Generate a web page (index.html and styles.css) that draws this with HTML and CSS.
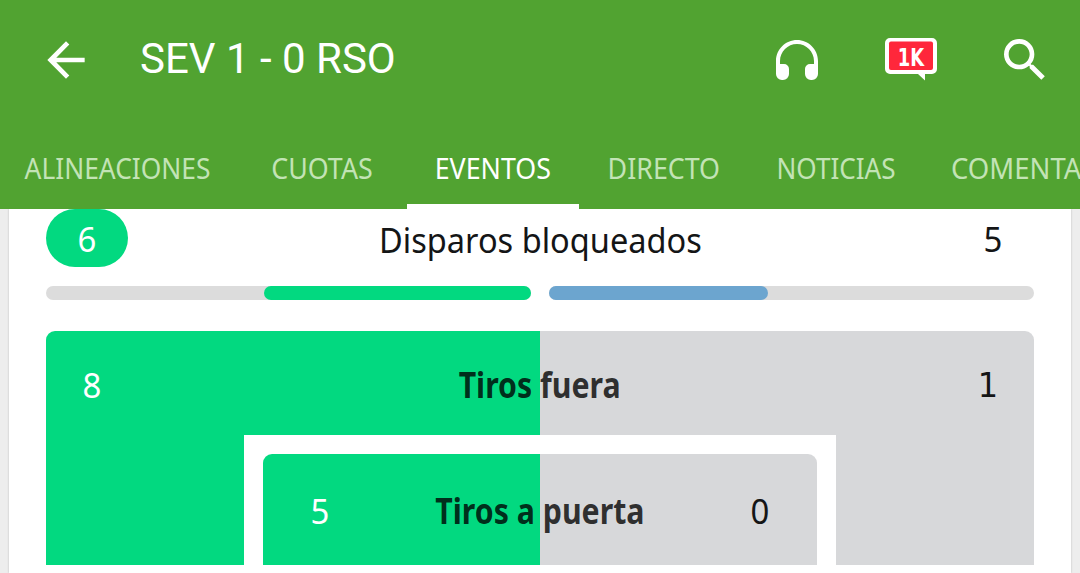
FILE: index.html
```html
<!DOCTYPE html>
<html lang="es">
<head>
<meta charset="utf-8">
<title>SEV 1 - 0 RSO</title>
<link rel="stylesheet" href="styles.css">
</head>
<body>
<header class="header">
  <div class="toolbar">
    <svg class="back" viewBox="0 0 24 24"><path d="M20 11H7.83l5.59-5.59L12 4l-8 8 8 8 1.41-1.41L7.83 13H20v-2z"/></svg>
    <h1 class="title">SEV 1 - 0 RSO</h1>
    <svg class="headphones" viewBox="0 0 42 40"><path d="M21 0C9.400 0 0 9.400 0 21v13a6 6 0 0 0 6 6h1a6 6 0 0 0 6-6v-5a5 5 0 0 0-5-5H4v-3C4 11.600 11.600 4 21 4s17 7.600 17 17v3h-4a5 5 0 0 0-5 5v5a6 6 0 0 0 6 6h1a6 6 0 0 0 6-6V21C42 9.400 32.600 0 21 0z"/></svg>
    <div class="comments">
      <svg class="bubble" viewBox="0 0 52 43"><path d="M5 0h42a5 5 0 0 1 5 5v26a5 5 0 0 1-5 5h-7v6.500L33 36H5a5 5 0 0 1-5-5V5a5 5 0 0 1 5-5z"/><rect class="bubble-fill" x="4" y="3.500" width="44" height="28.500" rx="2"/></svg>
      <span class="count">1K</span>
    </div>
    <svg class="search" viewBox="0 0 24 24"><path d="M15.500 14h-.79l-.28-.27A6.471 6.471 0 0 0 16 9.500 6.500 6.500 0 1 0 9.500 16c1.610 0 3.090-.59 4.230-1.570l.27.280v.79l5 4.990L20.490 19l-4.990-5zm-6 0C7.010 14 5 11.990 5 9.500S7.010 5 9.500 5 14 7.010 14 9.500 11.990 14 9.500 14z"/></svg>
  </div>
  <nav class="tabs">
    <a class="tab t1"><span class="fit">ALINEACIONES</span></a>
    <a class="tab t2"><span class="fit">CUOTAS</span></a>
    <a class="tab t3 active"><span class="fit">EVENTOS</span></a>
    <a class="tab t4"><span class="fit">DIRECTO</span></a>
    <a class="tab t5"><span class="fit">NOTICIAS</span></a>
    <a class="tab t6"><span class="fit">COMENTARIOS</span></a>
  </nav>
</header>
<main class="card">
  <section class="stat">
    <span class="value pill"><span class="num">6</span></span>
    <span class="label fit">Disparos bloqueados</span>
    <span class="value"><span class="num">5</span></span>
  </section>
  <div class="bars">
    <div class="bar home"><div class="fill" style="width:267px"></div></div>
    <div class="bar away"><div class="fill" style="width:219px"></div></div>
  </div>
  <section class="outer split">
    <div class="row outer-row">
      <span class="num light">8</span>
      <span class="name fit n1">Tiros fuera</span>
      <span class="num footed">1</span>
    </div>
    <div class="frame">
      <div class="inner split row">
        <span class="num light">5</span>
        <span class="name fit n2">Tiros a puerta</span>
        <span class="num">0</span>
      </div>
    </div>
  </section>
</main>
</body>
</html>
```
FILE: styles.css
```css
* { box-sizing: border-box; }
body {
  margin: 0;
  width: 1080px;
  height: 573px;
  overflow: hidden;
  background: #ededed;
  font-family: "Noto Sans", sans-serif;
  color: #141516;
}
svg { display: block; fill: #fff; flex: none; }
.header { height: 209px; background: #51a331; overflow: hidden; position: relative; z-index: 1; }
.toolbar { height: 120px; display: flex; align-items: center; padding: 0 27px 0 38px; }
.back { width: 56px; height: 56px; }
.title {
  margin: -3px auto 0 46px;
  font: 400 42px/50px Roboto, sans-serif;
  color: #fff;
  white-space: nowrap;
}
.headphones { width: 42px; height: 40px; margin-right: 67px; }
.comments { display: grid; width: 52px; height: 43px; margin: -2px 60px 0 0; }
.bubble, .count { grid-area: 1 / 1; }
.bubble { width: 52px; height: 43px; }
.bubble-fill { fill: #ff273b; }
.count {
  justify-self: center;
  font: 700 24.500px/39px "DejaVu Sans", sans-serif;
  color: #fff;
  transform: scaleX(.73);
}
.search { width: 56px; height: 56px; }
.tabs { display: flex; height: 89px; margin-left: -3px; width: 1200px; }
.tab {
  flex: none;
  display: flex;
  justify-content: center;
  padding-top: 28px;
  font-size: 28.500px;
  line-height: 40px;
  color: #c3e3b6;
  border-bottom: 5px solid transparent;
}
.t1 { width: 242px; }
.t2 { width: 166px; }
.t3 { width: 172px; margin-left: 2px; }
.t4 { width: 169px; }
.t5 { width: 176px; }
.t6 { width: 250px; justify-content: flex-start; padding-left: 27px; }
.active { color: #fff; border-color: #fff; }
.fit { display: block; white-space: nowrap; transform: scaleX(.94); }
.t1 .fit { transform: scaleX(.925); }
.t5 .fit { transform: scaleX(.915); }
.t6 .fit { transform: scaleX(.965); transform-origin: left; }
.card {
  width: 1062px;
  height: 364px;
  margin-left: 9px;
  padding: 0 37px;
  background: #fff;
  box-shadow: 0 0 2px #bbb;
}
.stat { height: 58px; display: flex; justify-content: space-between; align-items: center; font-size: 35px; line-height: 48px; }
.stat .label { padding: 3px 0 0 2px; transform: scaleX(.93); }
.value { width: 82px; display: flex; justify-content: center; align-items: center; height: 58px; padding-top: 2px; }
.pill { background: #02d980; color: #fff; border-radius: 29px; }
.bars { margin-top: 19px; display: flex; justify-content: space-between; }
.bar { width: 485px; height: 14px; border-radius: 7px; background: #dcdcdc; display: flex; }
.home { justify-content: flex-end; }
.fill { border-radius: 7px; background: #02d980; }
.away .fill { background: #6ca5cf; }
.split { background: linear-gradient(90deg, #02d980 50%, #d7d8da 50%); border-radius: 9px 9px 0 0; }
.outer { height: 234px; margin-top: 31px; }
.row { display: flex; justify-content: space-between; align-items: center; }
.outer-row { height: 104px; padding: 3px 35px 0 36px; }
.num { font-size: 35px; line-height: 48px; transform: scaleX(.94); }
.footed { font: 400 34px/48px "DejaVu Sans", sans-serif; }
.light { color: #fff; }
.name { font-size: 35px; line-height: 48px; font-weight: 700; color: rgba(0, 0, 0, .8); }
.row .name { transform: scaleX(.865); }
.frame { width: 592px; height: 130px; margin: 0 auto; padding: 19px 19px 0; background: #fff; }
.inner { height: 111px; padding: 2px 47px 0; }
```
